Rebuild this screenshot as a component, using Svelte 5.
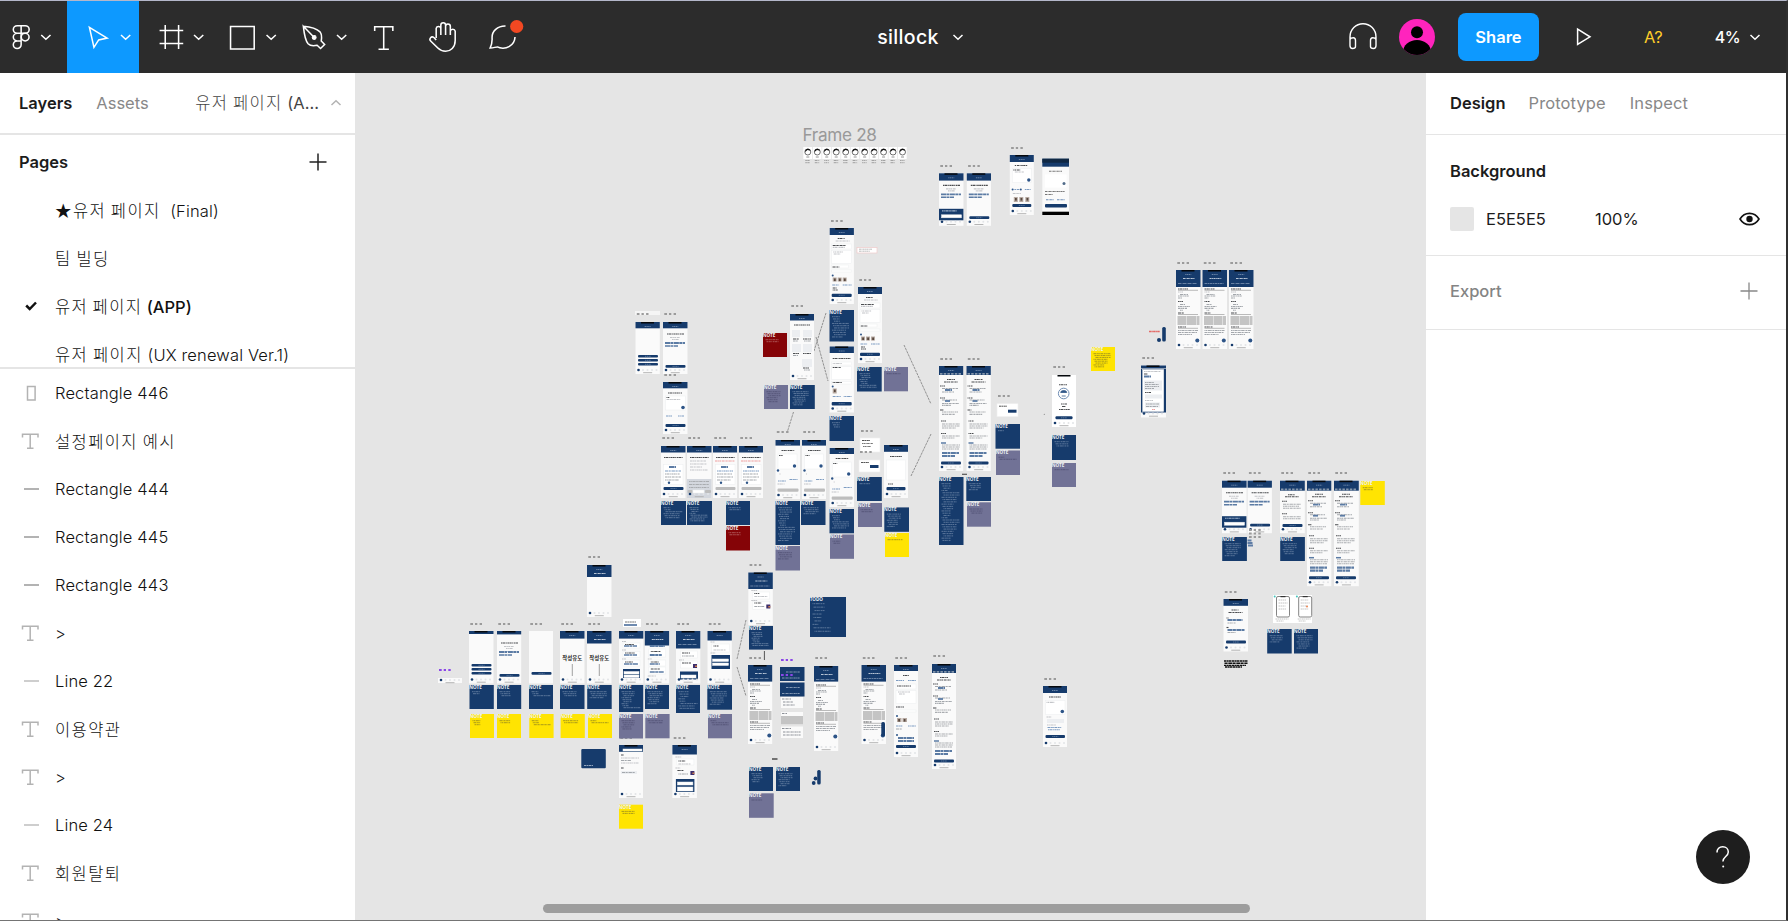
<script>
  const pages = [
    { name: '★유저 페이지  (Final)' },
    { name: '팀 빌딩' },
    { name: '유저 페이지 (APP)', active: true },
    { name: '유저 페이지 (UX renewal Ver.1)' }
  ];
  const layers = [
    ['rect', 'Rectangle 446'], ['text', '설정페이지 예시'], ['line', 'Rectangle 444'],
    ['line', 'Rectangle 445'], ['line', 'Rectangle 443'], ['text', '>'], ['thin', 'Line 22'],
    ['text', '이용약관'], ['text', '>'], ['thin', 'Line 24'], ['text', '회원탈퇴'], ['text', '>']
  ];

  const runs = (s) => s.split(/([★\uac00-\ud7a3]+)/).filter(Boolean)
    .map((t) => ({ t, ko: /[\uac00-\ud7a3]/.test(t) }));

  const NAVY = '#163b6c', SLATE = '#717296', RED = '#850407', YELLOW = '#ffe402';

  // Thumbnail contents: [kind, x, y, w, h], relative to the frame.
  const title = [['t', 4, 12, 17], ['g', 7, 15.5, 10], ['g', 9, 17.5, 7]];
  const chips = [['h', 2, 21, 20, 1.8], ['h', 2, 24, 13, 1.6]];
  const report = [
    ['t', 2, 19, 10], ['l', 2, 20.3, 20], ['g', 2, 22, 5], ['d', 4, 24.5, 8], ['d', 2, 26, 11], ['d', 2, 28, 4],
    ['t', 2, 31.5, 5], ['d', 4, 34.5, 5], ['d', 2, 36.5, 12], ['d', 2, 38.3, 9], ['d', 4, 40.2, 3],
    ['t', 2, 43, 6], ['l', 2, 44.5, 20], ['k', 1.5, 46, 9, 9], ['k', 11, 46, 9, 9], ['k', 20.5, 46, 3, 9],
    ['t', 2, 57, 8], ['l', 2, 58.3, 20], ['d', 2, 60.5, 20], ['d', 2, 62.5, 19], ['d', 2, 64.5, 14], ['o', 21.3, 70.5, 2]
  ];
  const long = [
    ['t', 8, 13.5, 8], ['t', 5, 16, 14], ['t', 1, 20, 5], ['d', 3, 22.5, 16], ['h', 6, 24, 7, 1.8], ['d', 3, 26, 12],
    ['t', 1, 32, 5], ['d', 3, 34, 15], ['h', 6, 35, 5, 1.8], ['d', 3, 37.5, 17], ['d', 3, 39.3, 9],
    ['t', 1, 44, 4], ['m', 3, 46, 16], ['m', 3, 48.3, 13], ['t', 2, 55, 5], ['m', 3, 58, 18], ['m', 3, 60, 18], ['m', 3, 62, 14],
    ['t', 2, 67.5, 5], ['m', 3, 70, 18], ['m', 3, 72, 13], ['h', 2, 77, 5, 1.5], ['m', 3, 79, 18], ['m', 3, 81, 18], ['m', 3, 83, 17],
    ['h', 3, 87, 17, 2.2], ['h', 3, 90, 13, 2.2], ['b', 2, 95.5, 20, 3]
  ];
  const kinds = {
    choice: [['b', 2.5, 33, 20, 2.6], ['b', 2.5, 37, 20, 2.6], ['b', 2.5, 41, 20, 2.6]],
    one: [['b', 2.5, 41, 20, 2.8]],
    intro: [...title, ...chips, ['b', 2.5, 43, 20, 2.8]],
    popup: [...title, ...chips, ['n', 0, 35.5, 24.4, 11.5], ['w', 3, 37.5, 15], ['c', 2.5, 41.5, 20, 3]],
    empty: [],
    urge: [['s', 0, 29.3], ['v', 12.3, 33, 12]],
    form: [['t', 5, 10.5, 13], ['c', 2.5, 13.5, 19, 14], ['t', 3.5, 15, 7], ['g', 5, 17, 9], ['o', 19, 25, 1.7],
      ['o', 2.8, 34.5, 1], ['w2', 3.5, 34.5, 6], ['o', 11, 34.5, 1], ['w2', 15, 34.5, 6], ['g', 3, 38.5, 8],
      ['p', 4, 42, 4, 5], ['p', 9.5, 42, 4, 5], ['p', 15.5, 42, 4, 5], ['b', 2.5, 49, 19, 3]],
    choices: [['t', 6, 11, 12], ['c', 2.5, 14.5, 19.5, 14], ['g', 3.5, 16.3, 8], ['o', 19.3, 25.5, 1.8], ['g', 3.5, 31, 5], ['f', 4, 33, 17, 4],
      ['g', 4, 39, 9], ['w2', 4.5, 41.5, 14], ['w2', 5, 43.7, 12], ['b', 2.5, 49, 19.5, 3]],
    card: [['t', 5, 11, 14], ['c', 2.5, 14, 20, 14], ['t', 3.5, 15.5, 3], ['g', 3.5, 17.5, 14], ['o', 20, 25.5, 1.8],
      ['w2', 3, 34, 6], ['w2', 15, 34, 6], ['b', 2.5, 42, 20, 3]],
    wide: [['t', 6, 10.5, 13], ['c', 2.5, 14, 19, 15], ['t', 3.5, 15.5, 4], ['o', 19, 26, 1.7], ['o', 2.5, 30.5, 1.2],
      ['g', 4, 34, 1], ['w2', 2.5, 41, 8], ['w2', 14, 39.5, 8], ['g', 2, 44, 7], ['kb', 2, 48.5, 21, 3.2]],
    longform: [['t', 8, 10.5, 7], ['g', 6, 13, 14], ['c', 2, 16, 20, 5], ['t', 3, 17.5, 13], ['g', 3, 19.3, 12], ['c', 2, 22.5, 20, 13],
      ['g', 3.5, 24, 10], ['g', 4, 26, 7], ['c', 2, 37, 17, 3], ['t', 2.8, 39, 7], ['c', 2, 42, 20, 2], ['o', 3, 47.5, 1],
      ['p', 3, 49.5, 4, 4], ['p', 8, 49.5, 4, 4], ['p', 13, 49.5, 4, 4], ['w2', 2.5, 57, 7], ['w2', 13, 57, 9], ['t', 3, 60, 4], ['t', 3, 62, 5], ['b', 2, 65.7, 20, 3.2]],
    midform: [['t', 3, 12, 18], ['c', 2, 15.5, 20, 3], ['g', 3, 17, 9], ['c', 2, 20, 20, 13], ['t', 3, 21, 8], ['c', 2, 35, 20, 2.5],
      ['t', 3, 36, 9], ['o', 3, 40, 1], ['p', 3, 42, 4, 5], ['w2', 3, 50, 8], ['w2', 14, 50, 8], ['b', 2, 55.5, 20, 3.4]],
    grid: [['t', 4, 11, 16], ['f', 2, 16, 8, 7], ['f', 13, 16, 9, 7], ['t', 3, 25, 6], ['t', 13, 25, 8], ['d', 3, 27, 5], ['d', 14, 27, 7],
      ['f', 2, 30, 9, 8], ['f', 13, 30, 9, 8], ['t', 3, 39.5, 6], ['t', 13, 39.5, 8], ['d', 3, 41.5, 5], ['f', 12, 45, 10, 8], ['t', 13, 54, 6], ['d', 14, 56, 6]],
    cal: [['t', 3, 11.5, 19], ['c', 2.5, 18.5, 19.5, 20], ['h', 8, 21, 7, 2], ['w2', 4, 25, 16], ['d', 4, 28, 15], ['d', 4, 31, 16], ['d', 4, 34, 14], ['o', 8, 36.8, 1.2], ['b', 2.5, 41, 20, 3]],
    calg: [['t', 3, 11.5, 19], ['r', 2, 15, 20], ['c', 2.5, 18.5, 19.5, 20], ['h', 8, 21, 7, 2], ['w2', 4, 25, 16], ['d', 4, 28, 15], ['d', 4, 31, 16], ['d', 4, 34, 14], ['o', 8, 36.8, 1.2], ['kb', 2.5, 41, 20, 3]],
    keys: [['t', 3, 11.5, 19], ['g', 3, 15, 16], ['g', 3, 18, 17], ['g', 3, 21, 12], ['g', 3, 24, 18], ['f2', 0, 33, 24.5, 19], ['m', 2, 35.5, 20], ['m', 2, 38.5, 20],
      ['m', 2, 41.5, 20], ['kb', 0.5, 44, 5, 3], ['kb', 18, 44, 6, 3], ['c', 6, 44, 11, 3]],
    big: [['t', 6, 11.5, 12], ['c', 2.5, 15, 19, 20], ['t', 4, 39, 5], ['b', 2.5, 42, 19, 3.2]],
    profile: [['t', 7, 9.7, 8], ['ring', 11.7, 18.5, 5.3], ['t', 9, 29, 6], ['t', 10, 31.5, 4], ['t', 7, 34.5, 11], ['b', 3.5, 41.3, 17, 3]],
    list: [['g', 3, 10.5, 4], ['c', 4, 12, 17, 5], ['t', 6, 13.5, 9], ['h', 5, 15, 13, 1.7], ['g', 3, 19, 4], ['c', 4, 20.5, 17, 6], ['t', 6, 22, 10], ['h', 5, 24, 13, 1.7],
      ['g', 3, 28, 4], ['c', 4, 29, 17, 6], ['t', 6, 31, 8], ['h', 5, 33, 14, 1.7], ['n', 4, 38, 17, 9], ['c', 5, 40.5, 15, 2.5], ['c', 5, 44, 15, 2.5]],
    list2: [['h', 5, 15, 15, 2], ['c', 4, 18, 17, 8], ['t', 6, 20.5, 10], ['h', 5, 24, 12, 1.8], ['g', 3, 28, 4], ['c', 4, 29, 17, 6], ['t', 6, 31, 8], ['h', 5, 33, 10, 1.7],
      ['c', 4, 36, 17, 7], ['t', 6, 38, 9], ['h', 5, 41, 14, 1.6], ['g', 3, 45, 8]],
    feed: [['g', 3, 18, 6], ['c', 4.5, 19.5, 17, 7], ['t', 6, 21, 5], ['g', 6, 24, 13], ['g', 3, 28, 6], ['c', 4.5, 29, 17, 8], ['t', 6, 30.5, 7], ['d', 6, 34, 10], ['img', 18, 32, 4, 4]],
    feedpop: [['g', 3, 12, 6], ['c', 4.5, 14, 17, 6], ['t', 6, 16, 7], ['g', 6, 19, 12], ['g', 3, 23, 5], ['t', 5, 25.5, 6], ['d', 6, 29, 10], ['img', 18, 26, 4, 4],
      ['n', 3.5, 34, 18.5, 13], ['c', 5, 37, 15.5, 3], ['c', 5, 42, 15.5, 4]],
    feed2: [['c', 4.5, 20, 17, 7], ['t', 6, 22, 8], ['d', 6, 25, 12], ['g', 3, 29, 5], ['c', 4.5, 30, 17, 7], ['t', 6, 32, 9], ['img', 17, 33, 4, 4], ['n', 4, 40.5, 18, 8], ['c', 5, 44, 15, 3]],
    modal2: [['g', 3, 11, 4], ['c', 4, 13, 18, 8], ['t', 6, 15, 5], ['g', 6, 19, 12], ['g', 3, 22, 5], ['n', 4, 24, 18.5, 14], ['c', 5, 28, 16, 2.5], ['c', 5, 32, 16, 2.5]],
    search: [['c', 4, 4, 19, 2], ['t', 2, 10, 3], ['g', 2, 13, 18], ['d', 2, 15.5, 10], ['g', 2, 18, 18], ['t', 2, 23, 3], ['f', 2, 26, 16, 3], ['d', 3, 27.5, 13]],
    modal: [['n', 0, 3, 25, 44], ['c', 1.7, 4, 21, 42], ['g', 3, 6, 17], ['t', 3, 8.5, 4], ['h', 3, 11, 7, 2], ['f', 3, 15, 18, 10], ['d', 4, 17, 9], ['d', 4, 19, 14], ['d', 4, 21, 14], ['d', 4, 23, 9],
      ['t', 4, 27, 6], ['f', 4, 29, 17, 4], ['g', 4, 35, 8], ['f', 4, 37, 15, 5], ['d', 5, 38.5, 13], ['d', 5, 41, 12], ['r', 11, 44, 3]],
    short: [['t', 8, 14, 7], ['t', 5, 16, 14], ['t', 2, 20.5, 5], ['m', 3, 23.5, 18], ['m', 3, 25.5, 16], ['m', 3, 27.5, 18], ['t', 2, 33, 5], ['m', 3, 36, 18], ['m', 3, 38, 18], ['b', 2.5, 43.3, 20, 3]],
    start: [['t', 8, 11, 7], ['t', 5, 13.5, 14], ['t', 3, 19, 2], ['h', 4, 21, 15, 1.8], ['m', 4, 24, 8], ['t', 3, 28.5, 2], ['h', 4, 31, 17, 1.8], ['m', 4, 33.5, 8], ['b', 2.5, 41.5, 20, 3]],
    pay: [['t', 9, 10.5, 6], ['w2', 2, 15.5, 8], ['w2', 14, 15.5, 8], ['c', 2, 19, 20, 5], ['t', 3, 21, 14], ['c', 2, 25.5, 20, 13], ['g', 4, 27, 12], ['g', 5, 29, 6], ['t', 2, 42, 8], ['c', 2, 45, 20, 2],
      ['o', 3, 51, 1], ['p', 3, 53, 4.5, 4], ['p', 8.5, 53, 4.5, 4], ['w2', 2, 61, 7], ['w2', 14, 61, 8], ['d', 2, 64, 6], ['o', 3, 70, 1], ['h', 4, 73, 16, 2], ['h', 4, 76, 16, 2], ['b', 2, 80, 20, 3]],
    report, long
  };

  // Frames: x, y, w, h, header height, kind, label y (0 hides the label).
  const frames = [
    [939, 173.3, 24.5, 52.5, 7.3, 'popup', 166], [966.8, 173.3, 24.2, 52.5, 7.3, 'intro', 166],
    [1009.8, 155, 24, 60, 7, 'form', 148], [829.7, 228, 24.2, 76, 7, 'longform', 221],
    [858, 287, 24, 76, 7, 'longform', 280], [790, 314, 24, 66, 6.5, 'grid', 306],
    [829.7, 346.5, 24.2, 66, 6.5, 'midform', 0], [635.5, 322, 24.3, 52, 6.3, 'choice', 314],
    [663, 322, 24.5, 52, 6.3, 'intro', 314], [663, 382, 24.5, 52, 6.3, 'card', 375],
    [939, 366, 24.2, 105, 9, 'long', 359], [966.5, 366, 24.3, 105, 9, 'long', 359],
    [1052, 375, 24, 52, 0, 'profile', 367],
    [661, 446, 24.5, 52, 6.5, 'cal', 438], [687, 446, 24.5, 52, 6.5, 'keys', 438],
    [713, 446, 24, 52, 6.5, 'calg', 438], [739, 446, 24, 52, 6.5, 'calg', 438],
    [775.5, 440, 24.5, 59, 5.6, 'wide', 432], [802, 440, 24, 59, 5.6, 'wide', 432],
    [829.7, 448, 24.3, 59, 6, 'wide', 0], [884, 445, 24, 53, 6.8, 'big', 0],
    [748.3, 572.5, 24.5, 52.5, 16.5, 'feed', 565], [587, 565, 24.5, 52, 12, 'empty', 557],
    [469, 631, 24.5, 52.5, 3, 'choice', 624], [497, 631, 24.2, 52.5, 3.4, 'intro', 624],
    [529, 631, 24, 52.5, 0, 'one', 624, true], [560, 631, 24.5, 52.5, 7.6, 'urge', 624],
    [587, 631, 24.5, 52.5, 12.5, 'urge', 624], [619, 631, 24.3, 52.5, 7.6, 'list', 0],
    [644.8, 631, 24.3, 52.5, 14.5, 'list2', 624], [676, 631, 24.3, 52.5, 17.5, 'feed2', 624],
    [707.5, 631, 24.3, 52.5, 9.5, 'modal2', 624], [619, 745, 24, 53, 6.8, 'search', 738],
    [672.4, 745, 24.5, 53, 9.5, 'feedpop', 738], [748, 665, 24.2, 79, 16.6, 'report', 658],
    [814, 666, 24.2, 85, 15.6, 'report', 658], [861.5, 665, 24.5, 79, 16.6, 'report', 658],
    [894, 665, 24, 92, 6, 'pay', 658], [932, 664, 24, 105, 9, 'long', 656],
    [1043, 686, 24, 61, 7, 'choices', 679], [1176, 270, 24.5, 79, 17, 'report', 263],
    [1202.5, 270, 24.5, 79, 17, 'report', 263], [1229, 270, 24.5, 79, 17, 'report', 263],
    [1141, 365.5, 25, 52, 2.5, 'modal', 358], [1222, 480.7, 24.6, 52.5, 7, 'popup', 473],
    [1247.6, 480.7, 24.3, 52.5, 7, 'intro', 473], [1280, 480.7, 24.8, 52.5, 10, 'short', 473],
    [1307, 480.7, 24.3, 105.5, 10, 'long', 473], [1334, 480.7, 24.8, 105.5, 10, 'long', 473],
    [1223.5, 599, 24.5, 52.5, 6.8, 'start', 592]
  ].map(([x, y, w, h, head, kind, label, plain]) => ({ x, y, w, h, head, items: kinds[kind], kind, label, plain }));

  // Notes: x, y, w, h, colour, number of text lines.
  const notes = [
    [763, 333, 24, 24, RED, 2], [764, 385, 24, 24, SLATE, 6], [790, 385, 24.8, 24, NAVY, 8],
    [829.5, 310, 24.5, 31.5, NAVY, 10], [857, 367, 24.7, 24.5, NAVY, 8], [884, 367, 24, 24.3, SLATE, 1],
    [829.5, 416, 24.5, 25, NAVY, 3], [857, 477, 24.8, 24, NAVY, 1], [858, 503, 24, 24, SLATE, 2],
    [661, 501, 25, 24, NAVY, 6], [687, 501, 25, 24, NAVY, 8], [726, 501, 24, 24, NAVY, 2], [726, 526, 24, 24.5, RED, 2],
    [775.5, 501, 24.5, 44, NAVY, 16], [775.5, 546, 24.5, 24.5, SLATE, 4], [801, 501, 24.5, 24, NAVY, 4],
    [829.5, 509, 24.5, 24.3, NAVY, 7], [830, 534.5, 24, 24.3, SLATE, 2], [884.3, 507.4, 24.7, 24.4, NAVY, 7],
    [885, 533, 24, 24, YELLOW, 1], [939, 477, 24.5, 68, NAVY, 26], [966.3, 477, 24.7, 24, NAVY, 4], [967, 502.3, 24, 24.4, SLATE, 3],
    [995.5, 424, 24.5, 24.7, NAVY, 1], [996, 450.5, 24, 24.5, SLATE, 2], [1052, 435, 24, 25, NAVY, 3], [1052, 463, 24, 24, SLATE, 1],
    [469.5, 685, 24.3, 24, NAVY, 2], [497, 685, 24.2, 24, NAVY, 3], [529, 685, 24, 24, NAVY, 3], [560, 685, 24.5, 24, NAVY, 3],
    [587.2, 685, 24.5, 24, NAVY, 4], [619, 685, 24.2, 27, NAVY, 9], [645, 685, 24, 24, NAVY, 7], [676, 685, 24, 28, NAVY, 8], [707.3, 685, 24.7, 24.7, NAVY, 7],
    [470, 714, 24, 24, YELLOW, 3], [497, 714, 24, 24, YELLOW, 2], [529.3, 714, 24.3, 24, YELLOW, 3], [560.6, 714, 24.2, 24, YELLOW, 2],
    [588, 714, 24, 24, YELLOW, 2], [619, 714, 24, 24.5, SLATE, 5], [645.3, 714, 24.3, 24.3, SLATE, 2], [708, 714, 24, 24.3, SLATE, 3],
    [619, 804.7, 24, 24, YELLOW, 2], [749, 626, 24, 23.6, NAVY, 8], [749, 767, 24, 24, NAVY, 5], [776, 767, 24, 24, NAVY, 7],
    [749, 793.3, 24.7, 24.5, SLATE, 1], [1091, 347, 24, 24, YELLOW, 8], [1360.3, 481, 24.5, 24, YELLOW, 2],
    [1222.2, 537, 24.7, 24, NAVY, 7], [1280.2, 537, 24.7, 24, NAVY, 6], [1267.2, 629, 24.5, 24.5, NAVY, 4], [1294, 629, 24, 24.5, NAVY, 7]
  ].map(([x, y, w, h, color, lines]) => ({ x, y, w, h, color, lines }));

  const extraLabels = [[439, 670, 1], [781, 660, 1], [781, 675, 1], [998, 396], [861, 431], [860, 452], [1249, 530], [1249, 533.5], [1249, 537]];
  const links = ['M826 313 814 351', 'M816 337 828 381', 'M793.5 412 787 433', 'M904 345 931 404', 'M931 434 911 476', 'M746 620 737 659', 'M737 667 746 696'];
  const dashes = ['1.6 .4 2.3 .5 1 .6', '2.5 .4 1 .4 1.7 .7', '1 .4 1.4 .6 3 .4', '3 .6 1.7 .3 .8 .5'];
  const people = Array.from({ length: 11 }, (_, i) => 803.3 + i * 9.47);
  const textColor = { t: '#4b4d50', g: '#c2c4c8', d: '#a3a7ac', m: '#a9acb0', w: '#9fb3cc', w2: '#7d9cc2', r: '#ef9d9d' };
</script>

{#snippet label(text)}{#each runs(text) as run}<span class:ko={run.ko}>{run.t}</span>{/each}{/snippet}

{#snippet chevron(x, y = 35)}<path d="M{x} {y}l4.5 4.2 4.5-4.2" stroke-width="1.5" />{/snippet}

{#snippet tripleDot(x, y, purple)}
  <g fill={purple ? '#8b46e8' : '#9b9b9b'}>
    <rect {x} y={y - 1} width="2.7" height="2" /><rect x={x + 4.7} y={y - 1} width="2.3" height="2" /><rect x={x + 9.3} y={y - 1} width="2.4" height="2" />
  </g>
{/snippet}

{#snippet tabs(x, y, w)}
  <circle cx={x + 3} cy={y} r="1.3" fill={NAVY} />
  {#each [7.5, 12, 16.5, 21] as dx}<circle cx={x + dx} cy={y} r="1" fill="#e2e4e7" />{/each}
  <rect x={x + w / 2 - 4.5} y={y + 2.2} width="9" height="1" fill="#b4b4b4" />
{/snippet}

{#snippet piece(f, it, i)}
  {@const x = f.x + it[1]}
  {@const y = f.y + it[2]}
  {#if it[0] === 'b'}
    <rect {x} {y} width={it[3]} height={it[4]} rx="1" fill={NAVY} /><path d="M{x + it[3] / 2 - 3} {y + it[4] / 2}h6" stroke="#7f98b7" stroke-width=".6" stroke-dasharray="1.3 .5" />
  {:else if it[0] === 'n'}<rect {x} {y} width={it[3]} height={it[4]} fill={NAVY} />
  {:else if it[0] === 'c'}<rect {x} {y} width={it[3]} height={it[4]} fill="#fff" stroke="#eceeef" stroke-width=".5" />
  {:else if it[0] === 'f'}<rect {x} {y} width={it[3]} height={it[4]} fill="#eceef1" />
  {:else if it[0] === 'f2'}<rect {x} {y} width={it[3]} height={it[4]} fill="#d3d7de" />
  {:else if it[0] === 'k'}<rect {x} {y} width={it[3]} height={it[4]} fill="#c4c4c4" />
  {:else if it[0] === 'kb'}<rect {x} {y} width={it[3]} height={it[4]} rx="1" fill="#bdbdbd" />
  {:else if it[0] === 'p'}<rect {x} {y} width={it[3]} height={it[4]} fill="#b7aaa2" /><rect x={x + 1.2} y={y + 1} width="1.8" height="2.6" fill="#57483f" />
  {:else if it[0] === 'img'}<rect {x} {y} width={it[3]} height={it[4]} fill="#3c2d6b" /><rect x={x + 2} y={y + 1.5} width="2" height="1.5" fill="#cc7d4b" />
  {:else if it[0] === 'h'}<path d="M{x} {y}h{it[3]}" stroke="#5b7ba4" stroke-width={it[4]} stroke-dasharray="5 .4 3 .5" />
  {:else if it[0] === 'l'}<path d="M{x} {y}h{it[3]}" stroke="#aaa" stroke-width=".8" />
  {:else if it[0] === 'v'}<path d="M{x} {y}v{it[3]}" stroke="#8a8a8a" stroke-width=".8" />
  {:else if it[0] === 'o'}<circle cx={x} cy={y} r={it[3]} fill="#2d5487" />
  {:else if it[0] === 'ring'}<circle cx={x} cy={y} r={it[3]} fill="#fff" stroke="#6f8db3" /><path d="M{x - 3} {y - 1}q0-2 3-2t3 2zM{x - 2} {y + 2.5}h4" stroke="#315889" fill="#315889" stroke-width=".8" />
  {:else if it[0] === 's'}<text x={f.x + f.w / 2} {y} class="urge" text-anchor="middle">작성유도</text>
  {:else}<path d="M{x} {y}h{it[3]}" stroke={textColor[it[0]]} stroke-width="1.15" stroke-dasharray={dashes[i % 4]} />
  {/if}
{/snippet}

{#snippet note(n, word)}
  <rect x={n.x} y={n.y} width={n.w} height={n.h} fill={n.color} />
  <text x={n.x - 0.2} y={n.y + 3.8} class="note">{word}</text>
  {#each Array(n.lines) as _, i}
    <path d="M{n.x + 2.5 + (i * 7 % 3)} {n.y + 6.7 + i * (n.h - 9) / Math.max(n.lines, 7.5)}h{6 + (i * 11 + Math.round(n.x)) % 12}"
      stroke={n.color === NAVY ? '#7189a9' : n.color === RED ? '#b96d6e' : n.color === YELLOW ? '#8f8420' : '#4d4e70'}
      stroke-width=".75" stroke-dasharray={dashes[(i + Math.round(n.x)) % 4]} />
  {/each}
{/snippet}

<div class="app">
  <header>
    <nav>
      <button><svg width="67" height="72" viewBox="0 1 65 72" preserveAspectRatio="none"><path d="M20.5 25.7h-3.8a3.7 3.7 0 0 0 0 7.6h3.8zm0 0h4a3.7 3.7 0 0 1 0 7.6h-4zm0 7.6h-3.8a3.7 3.7 0 0 0 0 7.6h3.8zm0 7.6h-3.8a3.8 3.8 0 1 0 3.8 3.8z" stroke-width="1.5" /><circle cx="24.4" cy="37.1" r="3.8" stroke-width="1.5" />{@render chevron(40)}</svg></button>
      <button class="on"><svg width="72" height="72" viewBox="65 1 70 72" preserveAspectRatio="none"><path d="M86.8 27.4 104 38.1l-8.2 1.8-4.6 7.4z" stroke-width="1.5" />{@render chevron(117.5)}</svg></button>
      <button><svg width="72" height="72" viewBox="135 1 70 72" preserveAspectRatio="none"><path d="M160.5 25v24M173.5 25v24M155 30.5h23M155 43.5h23" stroke-width="1.5" />{@render chevron(188.5)}</svg></button>
      <button><svg width="72" height="72" viewBox="205 1 70 72" preserveAspectRatio="none"><path d="M224 26.5h23v22.500h-23z" stroke-width="1.5" />{@render chevron(259)}</svg></button>
      <button><svg width="72" height="72" viewBox="275 1 70 72" preserveAspectRatio="none"><path d="M293.8 26.3c5.500.500 13 2.400 16.200 5.600 2 2.500 1.800 5.400 1.200 9l3.300 3.500-4 4.100-3.300-3.300c-3.500.800-6.700.700-8.800-1.500-2.700-3.200-4-11.600-4.600-17.400l9.200 9.700" transform="translate(1 0)" stroke-width="1.5" /><circle cx="305.3" cy="37.5" r="1.9" fill="#fff" />{@render chevron(327.5)}</svg></button>
      <button><svg width="57" height="72" viewBox="345 1 55 72" preserveAspectRatio="none"><path d="M364 31v-4.300h17.500V31M372.700 27v22M367.700 49.300h10" stroke-width="1.5" /></svg></button>
      <button><svg width="62" height="72" viewBox="400 1 60 72" preserveAspectRatio="none"><path d="M423.400 38V28.300a2.300 2.300 0 0 1 4.500 0V35v-10a2.300 2.300 0 0 1 4.600 0v10-8.700a2.300 2.300 0 0 1 4.600 0V35v-3.800a2.400 2.400 0 0 1 4.700 0v9.300c0 7-4.500 10.800-9.300 10.800-3.400 0-5.400-1-7.500-3.200l-6.700-6.800c-2.400-2.300.300-5.600 2.900-3.800l2.200 2.400" stroke-width="1.5" /></svg></button>
      <button><svg width="62" height="72" viewBox="460 1 60 72" preserveAspectRatio="none"><path d="M490.500 26.100c-8-.200-13 5.300-13 11.200 0 4 .500 5-1.900 10.800 3.500 0 5-1.200 7-1.200 2.600 1.500 7.600 2 11.300-.200 3.500-2.100 5.600-5 5.800-9.700" stroke-width="1.5" /><circle cx="501.3" cy="26.5" r="6.4" fill="#f24822" stroke="none" /></svg></button>
    </nav>
    <div class="title">sillock <svg width="12" height="8" viewBox="0 0 12 8">{@render chevron(1.5, 2)}</svg></div>
    <div class="actions">
      <svg class="phones" width="30" height="30" viewBox="1348 22 30 30"><path d="M1350 39.500V37a13 13.300 0 0 1 26 0v2.500M1350 38.500v7c0 2 1 3 2.500 3s3-.300 3-2v-6c0-2-.700-2.800-2.200-2.800s-2.800.500-3.300 1.800zm26 0v7c0 2-1 3-2.500 3s-3-.300-3-2v-6c0-2 .700-2.800 2.200-2.800s2.800.500 3.300 1.800z" stroke-width="1.4" /></svg>
      <svg class="avatar" width="36" height="36"><defs><clipPath id="face"><circle cx="18" cy="18" r="18" /></clipPath></defs><g clip-path="url(#face)" stroke="none"><path fill="#ff24bd" d="M0 0h36v36H0z" /><circle cx="18" cy="13.3" r="6" fill="#000" /><ellipse cx="18" cy="33" rx="14" ry="12" fill="#000" /></g></svg>
      <button class="share">Share</button>
      <svg class="play" width="16" height="20"><path d="M1.6 2v15.500L14 9.800z" stroke-width="1.5" /></svg>
      <span class="missing">A?</span>
      <span class="zoom">4% <svg width="12" height="8" viewBox="0 0 12 8">{@render chevron(1.5, 2)}</svg></span>
    </div>
  </header>

  <main>
    <aside class="left">
      <div class="tabs"><b>Layers</b><span class="muted">Assets</span><span class="current">{@render label('유저 페이지 (A...')}</span><svg width="12" height="8" viewBox="0 0 12 8"><path d="m1.5 6 4.500-4.200L10.500 6" stroke="#b3b3b3" stroke-width="1.5" /></svg></div>
      <section class="pages">
        <div class="heading"><b>Pages</b><svg width="18" height="18"><path d="M9 .5v17M.5 9h17" stroke="#222" stroke-width="1.5" /></svg></div>
        {#each pages as p}
          <div class="row" class:active={p.active}>
            <i>{#if p.active}<svg width="14" height="12"><path d="m2.200 5.500 3.500 3.500L12 2.500" stroke="#111" stroke-width="2.5" /></svg>{/if}</i>
            <span>{@render label(p.name)}</span>
          </div>
        {/each}
      </section>
      <section class="layers">
        {#each layers as [kind, name]}
          <div class="row">
            <i><svg width="20" height="20" stroke="#b3b3b3">
              {#if kind === 'rect'}<path d="M6.500 3.500h7.600v13.400H6.500z" stroke-width="1.5" />
              {:else if kind === 'text'}<path d="M1.500 6.500V3.200h15.500v3.300M9.200 3v14M6 17.300h6.500" stroke-width="1.5" />
              {:else}<path d="M3 10h15" stroke-width={kind === 'line' ? 2 : 1.3} />{/if}
            </svg></i>
            <span>{@render label(name)}</span>
          </div>
        {/each}
      </section>
    </aside>

    <div class="canvas">
      <svg width="1070" height="847" viewBox="356 73 1070 847">
        <text x="802.5" y="141" class="frame-name" textLength="74.5">Frame 28</text>
        {#each people as x, i}
          <rect {x} y="147" width="8.7" height="12" fill="#fff" />
          <circle cx={x + 4.5} cy="152" r="3" fill="#fff" stroke="#333" stroke-width=".7" /><path d="M{x + 1.8} 152q0-3.500 3.200-3.300 2.500.400 2.200 2l-3-.800z" fill="#111" />
          <path d="M{x + 3} 157h3" stroke="#777" stroke-width=".8" />
          <path d="M{x + 2} 160.500h4.500M{x + 2} 162.700h4.500" stroke="#999" stroke-width=".9" stroke-dasharray={dashes[i % 4]} />
        {/each}

        <g stroke="#888" stroke-width=".9" stroke-dasharray="2.6 .8">{#each links as d}<path {d} />{/each}</g>
        <path d="M764.4 651v9" stroke="#555" />
        <rect x="635" y="311" width="25" height="4" fill="#f5f5f5" />

        {#each frames as f}
          <rect x={f.x} y={f.y} width={f.w} height={f.h} fill={f.kind === 'profile' ? '#fff' : '#fafafa'} />
          {#if f.head}
            <rect x={f.x} y={f.y} width={f.w} height={f.head} fill={NAVY} />
            {#if f.head > 4}<path d="M{f.x + f.w / 2 - 3} {f.y + 4.5}h6" stroke="#7f96b4" stroke-width=".8" stroke-dasharray="1.3 .5" />{/if}
            {#if f.head > 11}<path d="M{f.x + 7} {f.y + 8.5}h12" stroke="#b9c6d6" stroke-width="1.2" stroke-dasharray="2 .4 1 .5" />{/if}
            {#if f.head > 15}<path d="M{f.x + 2} {f.y + 13.5}h19" stroke="#6f88a9" stroke-width=".9" stroke-dasharray="3 .5 1 .5" />{/if}
            {#if f.kind === 'long' || f.kind === 'short'}<path d="M{f.x + 1} {f.y + f.head - 1.2}h22" stroke="#8496ab" stroke-width="1.8" stroke-dasharray="2.5 1.2" />{/if}
          {/if}
          {#if !f.plain}<rect x={f.x + 5.5} y={f.y} width="13" height="1.5" fill="#05080c" />{/if}
          {#each f.items as it, i}{@render piece(f, it, i)}{/each}
          {#if !f.plain}{@render tabs(f.x, f.y + f.h - 4, f.w)}{/if}
          {#if f.label}{@render tripleDot(f.x + 1.3, f.label)}{/if}
        {/each}

        <rect x="1042.3" y="158.7" width="26.7" height="56.3" fill="#fafafa" />
        <rect x="1042.3" y="158.7" width="26.7" height="8" fill={NAVY} /><rect x="1042.3" y="158.7" width="26.7" height="4" fill="#102844" />
        <rect x="1042.3" y="211.7" width="26.7" height="3.3" fill="#000" />
        <rect x="1045" y="174.5" width="21.5" height="13" fill="#fff" />
        <g stroke-width="1.1" stroke-dasharray="2 .5 1 .4"><path d="M1049 171.200h13M1045 191.500h20M1045 194.500h8" stroke="#777" /><path d="M1046 199.700h8M1057 199.700h8" stroke="#6d8fb8" /></g>
        <circle cx="1064" cy="183.5" r="1.5" fill="#516b89" /><rect x="1045" y="204" width="22" height="3.5" rx="1" fill={NAVY} />

        {#each notes as n}{@render note(n, 'NOTE')}{/each}
        {@render note({ x: 810, y: 597, w: 36, h: 40, color: NAVY, lines: 9 }, 'TODO')}
        <rect x="581.3" y="749" width="24.5" height="19.3" rx="1" fill={NAVY} /><path d="M584 765.500h9" stroke="#93a6be" stroke-dasharray="2 .5" />

        <rect x="857" y="247.5" width="20" height="5.5" fill="#fff" stroke="#f0caca" stroke-width=".7" /><path d="M859 249.200h13M859 251.200h11" stroke="#aaa" stroke-width=".8" stroke-dasharray="2 .4 1 .3" />
        <rect x="438" y="678" width="24" height="5" fill="#fafafa" />{@render tabs(438, 680, 24)}
        <rect x="623" y="619" width="18" height="8" fill="#fff" /><path d="M625 622h11" stroke="#777" stroke-dasharray="2 .4" /><path d="M624 625h13" stroke="#4a6d9b" stroke-width="1.6" />
        {#each [[860, 438, 20, 14], [859, 460, 21, 12], [997, 403.7, 21, 13]] as [x, y, w, h], i}
          <rect {x} {y} width={w} height={h} fill="#fff" stroke="#eee" stroke-width=".6" /><path d="M{x + 2} {y + 2.5}h8" stroke="#555" stroke-dasharray="2 .4" />
          {#if i}<rect x={x + 11} y={y + h - 7} width="8.5" height="3" fill={NAVY} />{:else}<path d="M862 443.500h11M863 446.500h8" stroke="#777" stroke-dasharray="1 .4 2 .3" />{/if}
        {/each}

        {#each [667, 682.5] as y}<rect x="780" {y} width="24.5" height="14" fill={NAVY} /><path d="M786 {y + 5}h14M782 {y + 11}h18" stroke="#8fa3bc" stroke-width=".9" stroke-dasharray="2 .5 1 .4" />{/each}
        <path d="M781 697h22v11h-22zM781 712h22v13h-22zM781 726.500h22v11.500h-22z" fill="#fafafa" />
        <path d="M781 716h22v8.500h-22z" fill="#c4c4c4" />
        <g stroke="#8d9198" stroke-width="1" stroke-dasharray="2 .5 1 .4"><path d="M782 699h9M783 702h10M783 705h12M782 713.500h5M782 728.500h9M783 732h18M783 735h18" /></g>
        {#each extraLabels as [x, y, purple]}{@render tripleDot(x, y, purple)}{/each}
        <path d="M772 759h5.500" stroke="#333" stroke-width="1.3" /><path d="M962 474.300h5" stroke="#555" stroke-width="1.2" />
        <g fill={NAVY}><rect x="817.2" y="770" width="3.5" height="14.5" rx="1.5" /><circle cx="815.5" cy="778.5" r="1.9" /><circle cx="813.7" cy="783" r="1.9" /><rect x="881.3" y="722" width="3.7" height="14.5" rx="1.5" /><rect x="1162.2" y="327" width="3.6" height="14.5" rx="1.5" /><circle cx="1159" cy="340" r="2" /></g>
        <path d="M1149 331.500h11" stroke="#e46a66" stroke-width="1.5" stroke-dasharray="2.5 .3 1 .3" />
        <path d="M1247.500 540.500h4M1247.500 543h5M1248 545.500h5" stroke="#5e7ca5" stroke-width="1.8" />
        <path d="M1224 661h24M1224.500 663.200h23M1224 665.400h22M1225 667h17" stroke="#111" stroke-width="1.4" stroke-dasharray="2.5 .4 1.3 .3 3 .5" />

        <rect x="1273" y="595" width="39" height="28" fill="#fff" />
        {#each [1276.5, 1298.7] as x}<rect {x} y="596.5" width="13" height="20.5" rx="1.5" fill="#fff" stroke="#777" stroke-width=".9" /><path d="M{x + 4} 596.700h5" stroke="#222" /><path d="M{x + 2} 600h8M{x + 2} 603h9M{x + 2} 606h7M{x + 2} 609h8M{x - 1} 619h13M{x} 621h7" stroke="#b5b5b5" stroke-width=".8" stroke-dasharray="2 .5 1 .5" /><circle cx={x - 1.8} cy="596.5" r="1" fill="#45c5bd" />{/each}
        <circle cx="1307" cy="606.5" r="1" fill="#eb8653" /><circle cx="1044.3" cy="414.3" r=".6" fill="#888" />
      </svg>
      <div class="scroll"></div>
    </div>

    <aside class="right">
      <div class="tabs"><b>Design</b><span class="muted">Prototype</span><span class="muted">Inspect</span></div>
      <section class="background">
        <b>Background</b>
        <div class="fill"><i></i><span class="hex">E5E5E5</span><span>100%</span>
          <svg width="21" height="14"><path d="M1 7c4.500-7.500 14.500-7.500 19 0-4.500 7.500-14.500 7.500-19 0z" stroke="#111" stroke-width="1.6" /><circle cx="10.5" cy="7" r="3.2" fill="#111" /></svg>
        </div>
      </section>
      <section class="export"><span>Export</span><svg width="18" height="18"><path d="M9 .5v17M.5 9h17" stroke="#888" stroke-width="1.3" /></svg></section>
      <button class="help" aria-label="Help"><svg width="16" height="24"><path d="M2 7.500C2 4 4.300 1.800 7.700 1.800s5.600 2.200 5.600 5.200c0 4.500-5.400 4.500-5.400 9.500" stroke-width="1.5" /><circle cx="8.2" cy="21.5" r="1" fill="#fff" stroke="none" /></svg></button>
    </aside>
  </main>
</div>

<style>
  .app { width: 1788px; height: 921px; box-sizing: border-box; border-top: 1px solid #b4b7ca; border-bottom: 1px solid #747474; border-right: 2px solid #303030; background: #fff; display: flex; flex-direction: column; overflow: hidden; font: 400 16.5px/24px Inter, "Noto Sans CJK KR", sans-serif; color: #1c1c1c; }
  svg { display: block; fill: none; flex: none; }
  header { height: 72px; flex: none; background: #2c2c2c; color: #fff; display: grid; grid-template-columns: 1fr auto 1fr; align-items: center; }
  header svg { stroke: #fff; }
  nav, .actions, .title, .zoom { display: flex; align-items: center; }
  button { border: 0; padding: 0; background: none; color: inherit; font: inherit; }
  nav .on { background: #0d99ff; }
  .title { font-size: 19.5px; font-weight: 500; letter-spacing: .35px; gap: 13px; padding-left: 55px; }
  .actions { justify-content: flex-end; padding-right: 25px; }
  .avatar { margin-left: 21px; }
  .share { width: 81px; height: 48px; margin-left: 23px; border-radius: 8px; background: #0d99ff; font-size: 16.5px; font-weight: 600; }
  .play { margin-left: 37px; }
  .missing { margin-left: 52px; color: #ffcd29; }
  .zoom { margin-left: 52px; font-size: 16px; font-weight: 500; letter-spacing: -.6px; gap: 9px; }
  main { flex: 1; min-height: 0; display: flex; }
  b { font-weight: 600; }
  .ko { font-family: "Noto Sans CJK KR", sans-serif; font-weight: 300; letter-spacing: 1.4px; }
  .left { width: 355px; flex: none; display: flex; flex-direction: column; border-right: 1px solid #e5e5e5; overflow: hidden; }
  .tabs { height: 60px; flex: none; display: flex; align-items: center; border-bottom: 1px solid #e5e5e5; }
  .muted { color: #888; letter-spacing: .12px; }
  .left .tabs { padding: 0 13px 1px 19px; border-bottom-width: 2px; height: 59px; }
  .left .tabs .muted { margin-left: 24px; letter-spacing: 0; }
  .current { margin-left: auto; margin-right: 11px; color: #444; white-space: nowrap; }
  .pages { height: 232px; flex: none; border-bottom: 2px solid #e5e5e5; overflow: hidden; }
  .heading { height: 51px; padding: 3px 28px 0 19px; box-sizing: border-box; display: flex; align-items: center; justify-content: space-between; }
  .row { height: 48px; display: flex; align-items: center; white-space: pre; font-weight: 350; letter-spacing: .15px; color: #111; }
  .row i { width: 34px; margin-left: 21px; display: flex; align-items: center; }
  .pages .row i { width: 31px; margin-left: 24px; }
  .row.active { font-weight: 500; letter-spacing: 0; }
  .row .ko { letter-spacing: 1.4px; }
  .layers { flex: 1; min-height: 0; overflow: hidden; }
  .canvas { width: 1070px; flex: none; position: relative; background: #e5e5e5; overflow: hidden; }
  .scroll { position: absolute; left: 187px; bottom: 7px; width: 707px; height: 9px; border-radius: 5px; background: #9d9d9d; }
  .frame-name { font: 400 17.2px Inter, sans-serif; fill: #999; }
  .note { font: 700 4.6px "Noto Sans", sans-serif; fill: #eef1f5; }
  .urge { font: 700 5.4px "Noto Sans CJK KR", sans-serif; fill: #222; }
  .right { width: 360px; flex: none; position: relative; background: #fff; }
  .right .tabs { padding: 0 0 1px 24px; gap: 23px; height: 62px; box-sizing: border-box; }
  .right .muted:last-child { margin-left: 1px; }
  .background { height: 121px; box-sizing: border-box; padding: 24px 24px 0; border-bottom: 1px solid #e5e5e5; }
  .fill { margin-top: 24px; display: flex; align-items: center; }
  .fill i { width: 24px; height: 24px; border-radius: 2px; background: #e5e5e5; margin-right: 12px; }
  .hex { width: 109px; }
  .fill svg { margin-left: auto; margin-right: 2px; }
  .export { height: 74px; box-sizing: border-box; padding: 0 28px 3px 24px; display: flex; align-items: center; justify-content: space-between; border-bottom: 1px solid #e5e5e5; color: #848484; font-weight: 500; }
  .help { position: absolute; right: 36px; bottom: 36px; width: 54px; height: 54px; border-radius: 50%; background: #1e1e1e; display: grid; place-items: center; }
  .help svg { stroke: #fff; }
</style>
